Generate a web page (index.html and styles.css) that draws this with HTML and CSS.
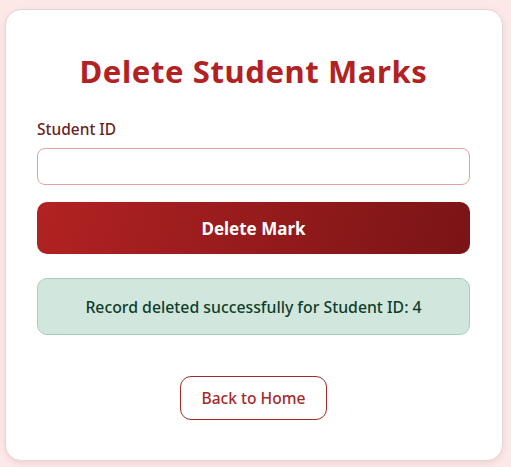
FILE: index.html
```html
<!DOCTYPE html>
<html lang="en">
<head>
<meta charset="utf-8">
<title>Delete Student Marks</title>
<link rel="stylesheet" href="styles.css">
</head>
<body>
<main class="card">
  <h1 class="title">Delete Student Marks</h1>
  <form class="form">
    <label class="label" for="sid">Student ID</label>
    <input class="input" id="sid" type="text">
    <button class="btn-delete" type="button">Delete Mark</button>
  </form>
  <div class="alert">Record deleted successfully for Student ID: 4</div>
  <div class="back-wrap">
    <a class="btn-back" href="#">Back to Home</a>
  </div>
</main>
</body>
</html>
```

FILE: styles.css
```css
* { box-sizing: border-box; }
html, body { margin: 0; padding: 0; }
body {
  background: #fde8e8;
  font-family: "Noto Sans", "Open Sans", sans-serif;
  min-height: 467px;
  padding: 9px 8px 0 5px;
}
.card {
  width: 498px;
  height: 452px;
  background: #ffffff;
  border: 1px solid #e4d6d6;
  border-radius: 16px;
  box-shadow: 0 2px 6px rgba(120, 60, 60, 0.12);
  padding: 39px 32px 0 31px;
}
.title {
  margin: 0 0 26px;
  text-align: center;
  font-size: 31px;
  line-height: 44px;
  font-weight: 700;
  color: #b22222;
  letter-spacing: 0.6px;
}
.form {
  display: flex;
  flex-direction: column;
}
.label {
  font-size: 15.5px;
  line-height: 20px;
  color: #6b1f1f;
  font-weight: 500;
  margin-bottom: 9px;
}
.input {
  height: 37px;
  border: 1px solid #e0a3a3;
  border-radius: 8px;
  background: #fff;
  font: inherit;
  margin-bottom: 17px;
}
.btn-delete {
  height: 52px;
  border: none;
  border-radius: 10px;
  background: linear-gradient(105deg, #b22222 0%, #7a1416 100%);
  color: #ffffff;
  font-family: inherit;
  font-size: 17px;
  font-weight: 700;
}
.alert {
  margin-top: 24px;
  height: 57px;
  background: #d1e7dd;
  border: 1px solid #a3cfbb;
  border-radius: 10px;
  color: #0f3d2a;
  font-size: 15.8px;
  font-weight: 500;
  display: flex;
  align-items: center;
  justify-content: center;
}
.back-wrap {
  display: flex;
  justify-content: center;
  margin-top: 41px;
}
.btn-back {
  width: 147px;
  height: 44px;
  border: 1px solid #a52a2a;
  border-radius: 11px;
  color: #a52a2a;
  font-size: 15.6px;
  font-weight: 500;
  text-decoration: none;
  display: flex;
  align-items: center;
  justify-content: center;
}
```
